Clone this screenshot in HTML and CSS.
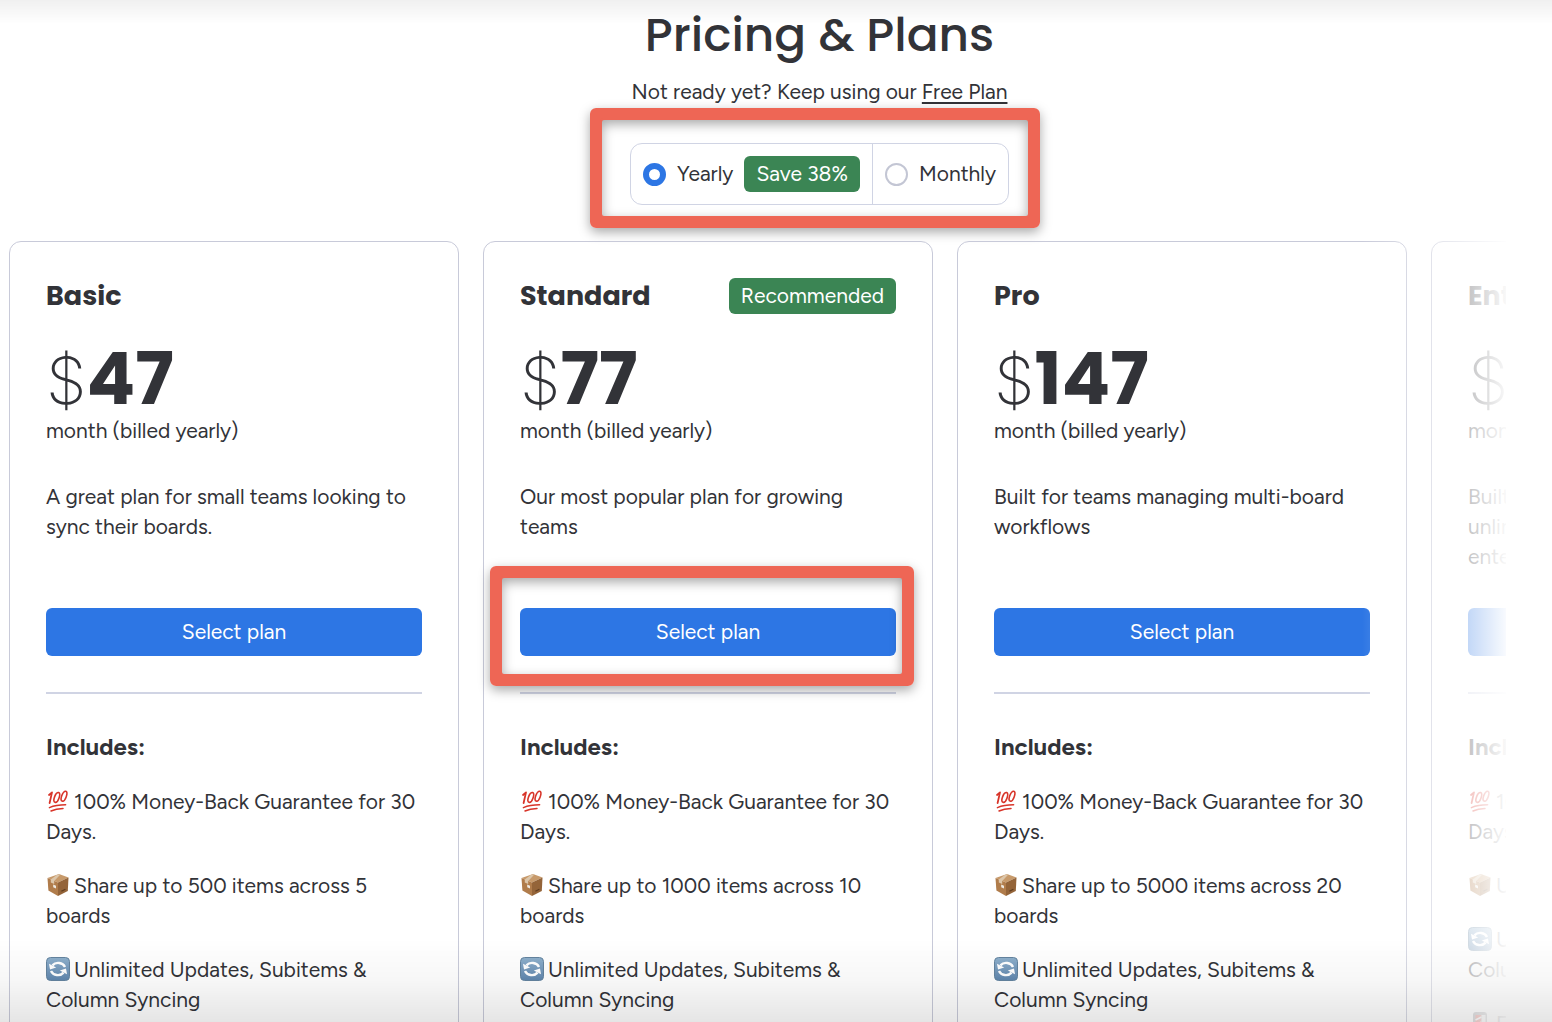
FILE: index.html
```html
<!DOCTYPE html>
<html lang="en">
<head>
    <meta charset="UTF-8">
    <meta name="viewport" content="width=device-width, initial-scale=1.0">
    <title>Pricing &amp; Plans</title>
    <link rel="stylesheet" href="styles.css">
</head>
<body>
    <!-- shared icons for the feature lists -->
    <svg class="icon-defs" aria-hidden="true">
        <defs>
            <linearGradient id="sync-bg" x1="0" y1="0" x2="0" y2="1">
                <stop offset="0" stop-color="#8fb0cc"/>
                <stop offset="1" stop-color="#5f86ae"/>
            </linearGradient>
        </defs>
        <symbol id="icon-hundred" viewBox="0 0 24 24">
            <g fill="none" stroke="#d8352a" stroke-linecap="round" stroke-linejoin="round">
                <path d="M3 6L6 3.4L3.6 14" stroke-width="1.8"/>
                <ellipse cx="10.8" cy="8.4" rx="2.3" ry="5.2" transform="rotate(20 10.8 8.4)" stroke-width="1.6"/>
                <ellipse cx="18" cy="7.2" rx="2.3" ry="5.2" transform="rotate(20 18 7.2)" stroke-width="1.6"/>
                <path d="M3.4 18.6Q10 15.8 19.6 15.8" stroke-width="1.5"/>
                <path d="M5 22Q10 19.6 17 19.4" stroke-width="1.5"/>
            </g>
        </symbol>
        <symbol id="icon-box" viewBox="0 0 24 24">
            <path d="M1.5 5L13 1L22.5 4.6L12 9.5Z" fill="#c79a6b"/>
            <path d="M1.5 5L12 9.5V23L2.4 17.6Z" fill="#b07c4b"/>
            <path d="M12 9.5L22.5 4.6L21.8 18L12 23Z" fill="#946439"/>
            <path d="M11.4 1.6L14.4 1.5L8.2 7.9V11L4.8 9.5V6.4Z" fill="#dcc6aa"/>
            <path d="M7.2 11.6L10 12.8V15.6L7.2 14.2Z" fill="#eee9e2"/>
            <path d="M15.4 18.2L19.4 16.2" stroke="#5e3b1f" stroke-width="1.2"/>
        </symbol>
        <symbol id="icon-sync" viewBox="0 0 24 24">
            <rect x="0.5" y="0.5" width="23" height="23" rx="4" fill="url(#sync-bg)" stroke="#64849f"/>
            <path d="M6.4 8.4A7.4 6.6 0 0 1 19 10" fill="none" stroke="#fff" stroke-width="2.4"/>
            <path d="M17.6 15.6A7.4 6.6 0 0 1 5 14" fill="none" stroke="#fff" stroke-width="2.4"/>
            <path d="M3 6.8L4 12.4L10.2 10.6Z" fill="#fff"/>
            <path d="M21 17.2L20 11.6L13.8 13.4Z" fill="#fff"/>
        </symbol>
        <symbol id="icon-barber" viewBox="0 0 24 24">
            <rect x="5" y="1" width="14" height="22" rx="3" fill="#8d8d92"/>
            <rect x="7.5" y="4" width="6" height="18" fill="#e2483d"/>
            <path d="M7.5 9L13.5 6M7.5 14L13.5 11" stroke="#fff" stroke-width="1.6"/>
            <rect x="13.5" y="4" width="4" height="18" fill="#f3f3f3"/>
        </symbol>
    </svg>

    <header class="page-header">
        <h1 class="title">Pricing &amp; Plans</h1>
        <p class="subtitle">Not ready yet? Keep using our <a href="#free">Free Plan</a></p>
        <div class="billing">
            <div class="toggle">
                <label class="toggle-option" for="yearly">
                    <input type="radio" name="billing" id="yearly" value="yearly" checked>
                    <span>Yearly</span>
                    <span class="badge">Save 38%</span>
                </label>
                <label class="toggle-option" for="monthly">
                    <input type="radio" name="billing" id="monthly" value="monthly">
                    <span>Monthly</span>
                </label>
            </div>
            <div class="highlight highlight-billing"></div>
        </div>
    </header>

    <main class="plans">
        <section class="plan">
            <div class="plan-head">
                <h2 class="plan-name">Basic</h2>
            </div>
            <div class="price"><span class="currency">$</span>47</div>
            <p class="period">month (billed yearly)</p>
            <p class="description">A great plan for small teams looking to sync their boards.</p>
            <div class="action">
                <button class="select-btn" type="button">Select plan</button>
            </div>
            <hr class="divider">
            <h3 class="includes">Includes:</h3>
            <ul class="features">
                <li><svg class="icon"><use href="#icon-hundred"/></svg>100% Money-Back Guarantee for 30 Days.</li>
                <li><svg class="icon"><use href="#icon-box"/></svg>Share up to 500 items across 5 boards</li>
                <li><svg class="icon"><use href="#icon-sync"/></svg>Unlimited Updates, Subitems &amp; Column Syncing</li>
            </ul>
        </section>

        <section class="plan">
            <div class="plan-head">
                <h2 class="plan-name">Standard</h2>
                <span class="badge">Recommended</span>
            </div>
            <div class="price"><span class="currency">$</span>77</div>
            <p class="period">month (billed yearly)</p>
            <p class="description">Our most popular plan for growing teams</p>
            <div class="action">
                <button class="select-btn" type="button">Select plan</button>
                <div class="highlight highlight-select"></div>
            </div>
            <hr class="divider">
            <h3 class="includes">Includes:</h3>
            <ul class="features">
                <li><svg class="icon"><use href="#icon-hundred"/></svg>100% Money-Back Guarantee for 30 Days.</li>
                <li><svg class="icon"><use href="#icon-box"/></svg>Share up to 1000 items across 10 boards</li>
                <li><svg class="icon"><use href="#icon-sync"/></svg>Unlimited Updates, Subitems &amp; Column Syncing</li>
            </ul>
        </section>

        <section class="plan">
            <div class="plan-head">
                <h2 class="plan-name">Pro</h2>
            </div>
            <div class="price"><span class="currency">$</span>147</div>
            <p class="period">month (billed yearly)</p>
            <p class="description">Built for teams managing multi-board workflows</p>
            <div class="action">
                <button class="select-btn" type="button">Select plan</button>
            </div>
            <hr class="divider">
            <h3 class="includes">Includes:</h3>
            <ul class="features">
                <li><svg class="icon"><use href="#icon-hundred"/></svg>100% Money-Back Guarantee for 30 Days.</li>
                <li><svg class="icon"><use href="#icon-box"/></svg>Share up to 5000 items across 20 boards</li>
                <li><svg class="icon"><use href="#icon-sync"/></svg>Unlimited Updates, Subitems &amp; Column Syncing</li>
            </ul>
        </section>

        <section class="plan">
            <div class="plan-head">
                <h2 class="plan-name">Enterprise</h2>
            </div>
            <div class="price"><span class="currency">$</span></div>
            <p class="period">month (billed yearly)</p>
            <p class="description">Built for organizations that need unlimited syncing between large enterprise teams</p>
            <div class="action">
                <button class="select-btn" type="button">Select plan</button>
            </div>
            <hr class="divider">
            <h3 class="includes">Includes:</h3>
            <ul class="features">
                <li><svg class="icon"><use href="#icon-hundred"/></svg>100% Money-Back Guarantee for 30 Days.</li>
                <li><svg class="icon"><use href="#icon-box"/></svg>Unlimited items and boards</li>
                <li><svg class="icon"><use href="#icon-sync"/></svg>Unlimited Updates, Subitems &amp; Column Syncing</li>
                <li><svg class="icon"><use href="#icon-barber"/></svg>Enterprise support</li>
            </ul>
        </section>
    </main>
</body>
</html>
```

FILE: styles.css
```css
* {
    box-sizing: border-box;
}

body {
    display: flex;
    flex-direction: column;
    margin: 0;
    height: 100vh;
    overflow: hidden;
    background-color: #fff;
    color: #323338;
    font-family: Figtree, Inter, sans-serif;
    font-size: 21px;
    line-height: 30px;
}

body::before,
body::after {
    content: "";
    position: fixed;
    left: 0;
    right: 0;
    z-index: 10;
    pointer-events: none;
}

body::before {
    top: 0;
    height: 24px;
    background: linear-gradient(rgba(0, 0, 0, 0.06), rgba(0, 0, 0, 0));
}

body::after {
    bottom: 0;
    height: 84px;
    background: linear-gradient(rgba(0, 0, 0, 0), rgba(0, 0, 0, 0.03) 50%, rgba(0, 0, 0, 0.1));
}

h1, h2, h3, p, ul {
    margin: 0;
    padding: 0;
}

.icon-defs {
    position: absolute;
    width: 0;
    height: 0;
}

.page-header {
    display: flex;
    flex: none;
    flex-direction: column;
    align-items: center;
    padding-left: 87px;
}

.title {
    font-family: Poppins, Inter, sans-serif;
    font-size: 47px;
    font-weight: 500;
    line-height: 70px;
}

.subtitle {
    margin-top: 7px;
}

.subtitle a {
    color: inherit;
    text-decoration-thickness: 2px;
    text-underline-offset: 3px;
}

.billing {
    position: relative;
    margin: 36px 0;
}

.toggle {
    display: flex;
    height: 62px;
    border: 1px solid #d0d4e4;
    border-radius: 12px;
}

.toggle-option {
    display: flex;
    align-items: center;
    gap: 11px;
    padding: 0 12px;
    cursor: pointer;
}

.toggle-option + .toggle-option {
    border-left: 1px solid #d0d4e4;
}

.toggle-option input {
    appearance: none;
    width: 23px;
    height: 23px;
    margin: 0;
    border: 2px solid #c3c6d4;
    border-radius: 50%;
}

.toggle-option input:checked {
    border: 6px solid #2d76e4;
}

.badge {
    padding: 3px 12px;
    border-radius: 6px;
    background-color: #3b8554;
    color: #fff;
}

/* Red frames drawn over the page */
.highlight {
    position: absolute;
    border: 12px solid #ee6655;
    border-radius: 6px;
    box-shadow: 0 4px 12px rgba(0, 0, 0, 0.35), inset 0 4px 12px rgba(0, 0, 0, 0.35);
    pointer-events: none;
}

/* keeps the inner corners of the frame slightly rounded */
.highlight::before {
    content: "";
    position: absolute;
    inset: -2px;
    border: 2px solid #ee6655;
    border-radius: 4px;
}

.highlight-billing {
    top: -35px;
    right: -31px;
    bottom: -23px;
    left: -40px;
}

.highlight-select {
    top: -42px;
    right: -18px;
    bottom: -30px;
    left: -30px;
}

.plans {
    position: relative;
    display: flex;
    flex: 1;
    align-items: flex-start;
    gap: 24px;
    min-height: 0;
    margin: 0 46px 0 9px;
    overflow: hidden;
}

/* Fades out the plans that run past the right side */
.plans::after {
    content: "";
    position: absolute;
    top: 0;
    right: 0;
    bottom: 0;
    width: 144px;
    background: linear-gradient(to right, rgba(255, 255, 255, 0), rgba(255, 255, 255, 0.97));
    pointer-events: none;
}

.plan {
    flex: none;
    width: 450px;
    padding: 36px;
    border: 1px solid #c8cad9;
    border-radius: 12px;
}

.plan-head {
    display: flex;
    justify-content: space-between;
    align-items: center;
    height: 36px;
}

.plan-name {
    font-family: Poppins, Inter, sans-serif;
    font-size: 27px;
    font-weight: 700;
}

.price {
    height: 76px;
    margin-top: 26px;
    font-family: Poppins, Roboto, sans-serif;
    font-size: 72px;
    font-weight: 700;
    line-height: 78px;
}

.currency {
    font-family: Inter, sans-serif;
    font-size: 65px;
    font-weight: 200;
}

.description {
    min-height: 90px;
    margin-top: 36px;
}

.action {
    position: relative;
    margin: 36px 0;
}

.select-btn {
    display: block;
    width: 100%;
    height: 48px;
    border: none;
    border-radius: 6px;
    background-color: #2d76e4;
    color: #fff;
    font: inherit;
    cursor: pointer;
}

.divider {
    height: 2px;
    margin: 0 0 36px;
    border: none;
    background-color: #d0d4e4;
}

.includes {
    font-size: 24px;
    font-weight: 700;
    line-height: 33px;
}

.features {
    display: flex;
    flex-direction: column;
    gap: 24px;
    margin-top: 24px;
    list-style: none;
}

.icon {
    width: 24px;
    height: 24px;
    margin-right: 4px;
    vertical-align: -4px;
}
```
